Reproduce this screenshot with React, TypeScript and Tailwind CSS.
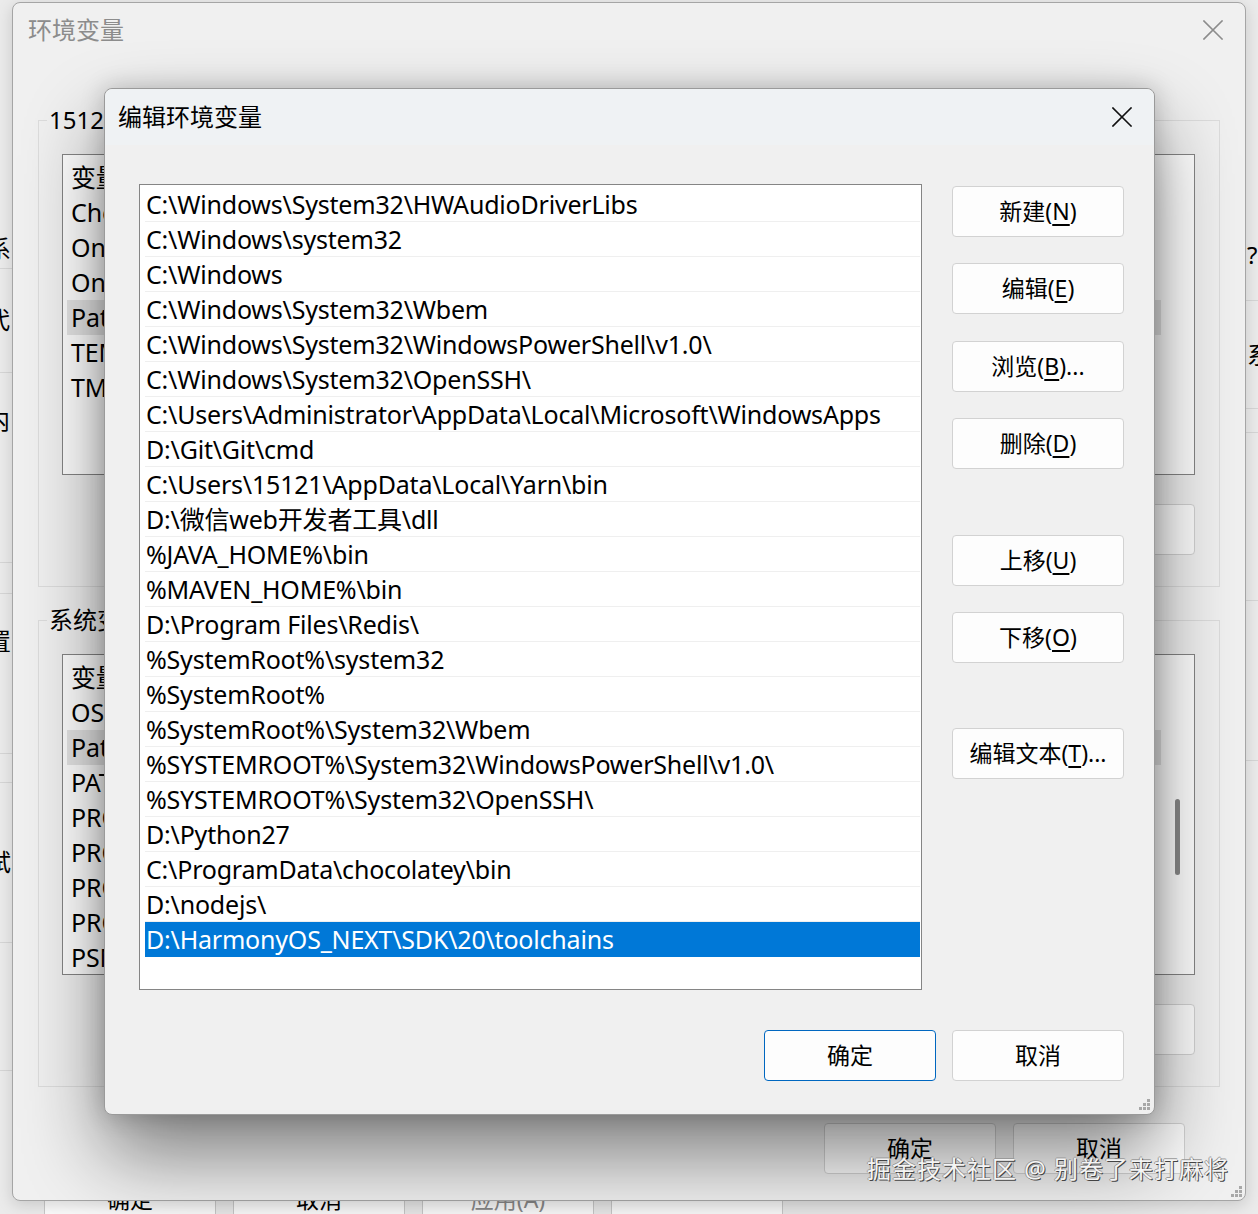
import React from "react";

const paths: string[] = [
  "C:\\Windows\\System32\\HWAudioDriverLibs",
  "C:\\Windows\\system32",
  "C:\\Windows",
  "C:\\Windows\\System32\\Wbem",
  "C:\\Windows\\System32\\WindowsPowerShell\\v1.0\\",
  "C:\\Windows\\System32\\OpenSSH\\",
  "C:\\Users\\Administrator\\AppData\\Local\\Microsoft\\WindowsApps",
  "D:\\Git\\Git\\cmd",
  "C:\\Users\\15121\\AppData\\Local\\Yarn\\bin",
  "D:\\微信web开发者工具\\dll",
  "%JAVA_HOME%\\bin",
  "%MAVEN_HOME%\\bin",
  "D:\\Program Files\\Redis\\",
  "%SystemRoot%\\system32",
  "%SystemRoot%",
  "%SystemRoot%\\System32\\Wbem",
  "%SYSTEMROOT%\\System32\\WindowsPowerShell\\v1.0\\",
  "%SYSTEMROOT%\\System32\\OpenSSH\\",
  "D:\\Python27",
  "C:\\ProgramData\\chocolatey\\bin",
  "D:\\nodejs\\",
  "D:\\HarmonyOS_NEXT\\SDK\\20\\toolchains",
];

const userVars = ["变量", "ChocolateyLastPathUpdate", "OneDrive", "OneDriveConsumer", "Path", "TEMP", "TMP"];
const sysVars = [
  "变量",
  "OS",
  "Path",
  "PATHEXT",
  "PROCESSOR_ARCHITECTURE",
  "PROCESSOR_IDENTIFIER",
  "PROCESSOR_LEVEL",
  "PROCESSOR_REVISION",
  "PSModulePath",
];

function XIcon({ color }: { color: string }) {
  return (
    <svg width="20" height="20" viewBox="0 0 20 20" fill="none">
      <path d="M1 1 L19 19 M19 1 L1 19" stroke={color} strokeWidth="1.6" strokeLinecap="square" />
    </svg>
  );
}

function Btn({ pre, k, post, blue }: { pre: string; k?: string; post?: string; blue?: boolean }) {
  return (
    <div
      className={
        blue
          ? "w-[172px] h-[51px] shrink-0 rounded-[4px] border border-[#0067c0] bg-[#fdfdfd] flex items-center justify-center text-[23px] leading-none"
          : "w-[172px] h-[51px] shrink-0 rounded-[4px] border border-[#d2d2d2] bg-[#fdfdfd] flex items-center justify-center text-[23px] leading-none"
      }
    >
      <span>
        {pre}
        {k ? (
          <>
            (<span className="underline underline-offset-[4px] decoration-[1.5px]">{k}</span>
            {post}
          </>
        ) : null}
      </span>
    </div>
  );
}

function Grip() {
  const dots = [
    [8, 0],
    [8, 4],
    [4, 4],
    [8, 8],
    [4, 8],
    [0, 8],
  ];
  return (
    <svg width="11" height="11" viewBox="0 0 11 11">
      {dots.map(([x, y], i) => (
        <rect key={i} x={x} y={y} width="3" height="3" fill="#a8a8a8" />
      ))}
    </svg>
  );
}

function VarList({ items, hl, scroll }: { items: string[]; hl: number; scroll?: boolean }) {
  return (
    <div className="relative ml-[23px] mr-[24px] h-[321px] border border-[#858585] bg-white pt-[5px] px-[4px] overflow-hidden">
      {items.map((t, i) => (
        <div
          key={i}
          className={
            i === hl
              ? "w-[1094px] h-[35px] leading-[35px] pl-[4px] text-[25px] tracking-[-0.15px] bg-[#e5e5e5] whitespace-nowrap"
              : "h-[35px] leading-[35px] pl-[4px] text-[25px] tracking-[-0.15px] whitespace-nowrap"
          }
        >
          {t}
        </div>
      ))}
      {scroll ? <div className="absolute right-[14px] top-[144px] w-[5px] h-[76px] rounded-full bg-[#8a8a8a]" /> : null}
    </div>
  );
}

function GroupBox({ label, items, hl, scroll, top }: { label: string; items: string[]; hl: number; scroll?: boolean; top: string }) {
  return (
    <div className={top}>
      <div className="relative h-[467px] border border-[#dcdcdc] pt-[33px]">
        <span className="absolute left-[8px] top-[-16px] px-[2px] bg-[#f0f0f0] text-[24px] leading-[30px] whitespace-nowrap">{label}</span>
        <VarList items={items} hl={hl} scroll={scroll} />
        <div className="flex justify-end gap-[16px] mr-[24px] mt-[29px]">
          <Btn pre="新建" k="W" post=")..." />
          <Btn pre="编辑" k="I" post=")..." />
          <Btn pre="删除" k="L" post=")" />
        </div>
      </div>
    </div>
  );
}

function SysWindow() {
  return (
    <div className="absolute inset-0">
      {/* left strip fragments */}
      <span className="absolute left-[-13px] top-[236px] text-[24px] leading-[26px]">系</span>
      <span className="absolute left-[-14px] top-[307px] text-[24px] leading-[26px]">代</span>
      <span className="absolute left-[-14px] top-[407px] text-[24px] leading-[26px]">内</span>
      <span className="absolute left-[-13px] top-[628px] text-[24px] leading-[26px]">置</span>
      <span className="absolute left-[-13px] top-[849px] text-[24px] leading-[26px]">试</span>
      <div className="absolute left-0 top-[268px] w-[12px] h-px bg-[#d6d6d6]" />
      <div className="absolute left-0 top-[372px] w-[12px] h-px bg-[#d6d6d6]" />
      <div className="absolute left-0 top-[562px] w-[12px] h-px bg-[#d6d6d6]" />
      <div className="absolute left-0 top-[593px] w-[12px] h-px bg-[#d6d6d6]" />
      <div className="absolute left-0 top-[753px] w-[12px] h-px bg-[#d6d6d6]" />
      <div className="absolute left-0 top-[782px] w-[12px] h-px bg-[#d6d6d6]" />
      <div className="absolute left-0 top-[942px] w-[12px] h-px bg-[#d6d6d6]" />
      <div className="absolute left-0 top-[1070px] w-[12px] h-px bg-[#d6d6d6]" />
      {/* right strip fragments */}
      <span className="absolute left-[1247px] top-[242px] text-[24px] leading-[26px]">?</span>
      <span className="absolute left-[1247px] top-[342px] text-[24px] leading-[26px]">系</span>
      <div className="absolute left-[1246px] top-[300px] w-[12px] h-px bg-[#d6d6d6]" />
      <div className="absolute left-[1246px] top-[408px] w-[12px] h-px bg-[#d6d6d6]" />
      <div className="absolute left-[1246px] top-[432px] w-[12px] h-px bg-[#d6d6d6]" />
      <div className="absolute left-[1246px] top-[600px] w-[12px] h-px bg-[#d6d6d6]" />
      <div className="absolute left-[1246px] top-[760px] w-[12px] h-px bg-[#d6d6d6]" />
      {/* bottom buttons */}
      <div className="absolute left-[44px] top-[1174px] flex gap-[17px]">
        <div className="w-[172px] h-[51px] rounded-[4px] border border-[#c8c8c8] bg-[#fbfbfb] flex items-center justify-center text-[23px]">确定</div>
        <div className="w-[172px] h-[51px] rounded-[4px] border border-[#c8c8c8] bg-[#fbfbfb] flex items-center justify-center text-[23px]">取消</div>
        <div className="w-[172px] h-[51px] rounded-[4px] border border-[#c8c8c8] bg-[#fbfbfb] flex items-center justify-center text-[23px] text-[#8a8a8a]">应用(A)</div>
        <div className="w-[172px] h-[51px] rounded-[4px] border border-[#c8c8c8] bg-[#fbfbfb]" />
      </div>
    </div>
  );
}

function EnvWindow() {
  return (
    <div className="absolute left-[12px] top-[2px] w-[1234px] h-[1199px] rounded-[8px] border border-[#a5a5a5] bg-[#f0f0f0] flex flex-col shadow-[0_4px_16px_rgba(0,0,0,0.15)]">
      <div className="h-[54px] shrink-0 flex items-center justify-between pl-[15px] pr-[22px]">
        <span className="text-[24px] leading-none text-[#8c8c8c]">环境变量</span>
        <XIcon color="#8c8c8c" />
      </div>
      <div className="mx-[25px] flex flex-col">
        <GroupBox top="mt-[63px]" label="15121 的用户变量(U)" items={userVars} hl={4} />
        <GroupBox top="mt-[33px]" label="系统变量(S)" items={sysVars} hl={2} scroll />
      </div>
      <div className="flex justify-end gap-[17px] mr-[60px] mt-[36px]">
        <Btn pre="确定" />
        <Btn pre="取消" />
      </div>
      <div className="absolute right-[3px] bottom-[3px]">
        <Grip />
      </div>
    </div>
  );
}

function EditDialog() {
  return (
    <div className="absolute left-[104px] top-[88px] w-[1051px] h-[1027px] rounded-[8px] border border-[#9a9a9a] bg-[#f0f0f0] flex flex-col shadow-[0_0_24px_rgba(0,0,0,0.2),0_40px_80px_rgba(0,0,0,0.48)]">
      <div className="h-[56px] shrink-0 flex items-center justify-between pl-[13px] pr-[22px] rounded-t-[8px] bg-[#eff2f4]">
        <span className="text-[24px] leading-none">编辑环境变量</span>
        <XIcon color="#111111" />
      </div>
      <div className="flex pl-[34px] pt-[39px]">
        <div className="w-[783px] h-[806px] shrink-0 border border-[#858585] bg-white pl-[5px] pr-[1px] pt-[2px] overflow-hidden">
          {paths.map((p, i) =>
            i === paths.length - 1 ? (
              <div key={i} className="h-[35px] leading-[35px] pl-[1px] text-[25px] tracking-[-0.2px] whitespace-nowrap bg-[#0078d7] text-white">
                {p}
              </div>
            ) : (
              <div key={i} className="h-[35px] leading-[34px] pl-[1px] text-[25px] tracking-[-0.2px] whitespace-nowrap border-b border-[#efefef]">
                {p}
              </div>
            )
          )}
        </div>
        <div className="ml-[30px] w-[172px] flex flex-col pt-[2px]">
          <Btn pre="新建" k="N" post=")" />
          <div className="h-[26px]" />
          <Btn pre="编辑" k="E" post=")" />
          <div className="h-[27px]" />
          <Btn pre="浏览" k="B" post=")..." />
          <div className="h-[26px]" />
          <Btn pre="删除" k="D" post=")" />
          <div className="h-[66px]" />
          <Btn pre="上移" k="U" post=")" />
          <div className="h-[26px]" />
          <Btn pre="下移" k="O" post=")" />
          <div className="h-[65px]" />
          <Btn pre="编辑文本" k="T" post=")..." />
        </div>
      </div>
      <div className="flex justify-end gap-[16px] pr-[30px] mt-[40px]">
        <Btn pre="确定" blue />
        <Btn pre="取消" />
      </div>
      <div className="absolute right-[4px] bottom-[4px]">
        <Grip />
      </div>
    </div>
  );
}

export default function App() {
  return (
    <div className="relative w-[1258px] h-[1214px] overflow-hidden bg-[#ebebeb] text-black font-['Noto_Sans','Noto_Sans_CJK_SC',sans-serif]">
      <SysWindow />
      <EnvWindow />
      <EditDialog />
      <div className="absolute left-[867px] top-[1153px] text-[24px] leading-[32px] tracking-[1px] whitespace-nowrap text-[#f4f4f4] [text-shadow:1px_1px_0_#444,-1px_0_0_#9a9a9a,0_-1px_0_#9a9a9a]">
        掘金技术社区 @ 别卷了来打麻将
      </div>
    </div>
  );
}
